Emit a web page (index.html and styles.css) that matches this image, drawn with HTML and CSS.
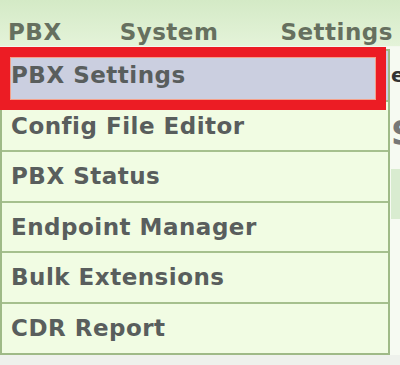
FILE: index.html
```html
<!DOCTYPE html>
<html>
<head>
  <title>PBX Menu</title>
  <link rel="stylesheet" href="styles.css">
</head>
<body>
  <div class="topbar">
    <span class="nav-item nav-pbx">PBX</span>
    <span class="nav-item nav-system">System</span>
    <span class="nav-item nav-settings">Settings</span>
  </div>

  <div class="page">
    <p class="page-line">e</p>
    <p class="page-title">S</p>
    <div class="page-band"></div>
  </div>

  <ul class="dropdown">
    <li class="menu-item active">PBX Settings</li>
    <li class="menu-item">Config File Editor</li>
    <li class="menu-item">PBX Status</li>
    <li class="menu-item">Endpoint Manager</li>
    <li class="menu-item">Bulk Extensions</li>
    <li class="menu-item">CDR Report</li>
  </ul>

  <div class="callout"></div>
</body>
</html>
```

FILE: styles.css
```css
body {
  margin: 0;
  width: 400px;
  height: 365px;
  overflow: hidden;
  position: relative;
  font-family: "DejaVu Sans", Verdana, sans-serif;
  font-weight: bold;
  letter-spacing: 0.5px;
  background-color: #eef1ec;
}

.topbar {
  height: 46px;
  background: linear-gradient(#d4eac6, #e4f3d9);
  border-bottom: 1px solid #f3f8ee;
  display: flex;
  align-items: flex-end;
  color: #66705f;
  font-size: 23px;
}

.nav-item {
  padding-bottom: 1px;
}

.nav-pbx {
  margin-left: 8px;
}

.nav-system {
  margin-left: 58px;
}

.nav-settings {
  margin-left: 62px;
}

.page {
  background-color: #f6faf2;
  height: 308px;
  padding-left: 391px;
}

.page-line {
  margin: 0;
  padding-top: 16px;
  font-size: 20px;
  color: #333;
}

.page-title {
  margin: 0;
  padding-top: 26px;
  font-size: 34px;
  color: #777;
}

.page-band {
  height: 50px;
  margin-top: 16px;
  background-color: #d9ecd0;
}

.dropdown {
  position: absolute;
  left: 0;
  top: 49px;
  width: 386px;
  margin: 0;
  padding: 0;
  list-style: none;
  background-color: #f1fce3;
  border: 2px solid #9fba87;
}

.menu-item {
  height: 48.6px;
  line-height: 48px;
  padding-left: 9px;
  font-size: 23px;
  color: #595e5d;
  border-top: 2px solid #a6c08e;
}

.menu-item:first-child {
  border-top: none;
}

.menu-item.active {
  background-color: #cbcfe0;
}

.callout {
  position: absolute;
  left: 0;
  top: 47px;
  width: 366px;
  height: 43px;
  border: 10px solid #ec1c24;
  box-shadow: inset 0 0 0 1px #f4a08a;
}
```
